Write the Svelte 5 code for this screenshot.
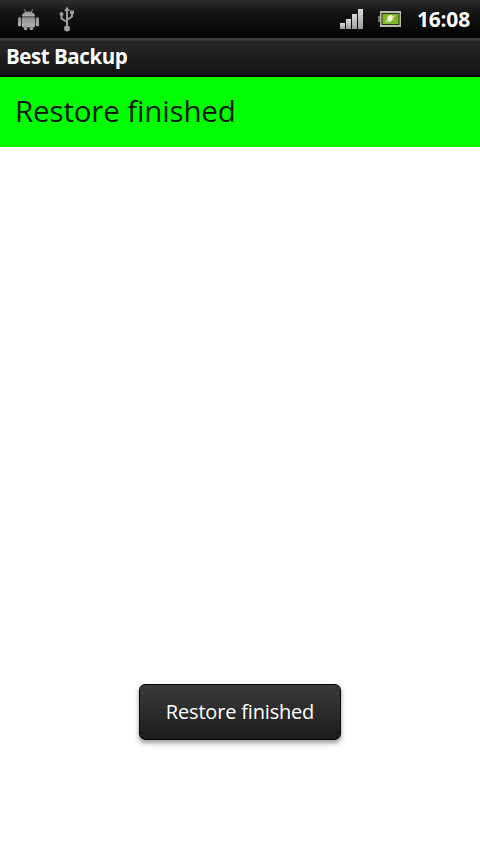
<script>
  let title = 'Best Backup';
  let message = 'Restore finished';
</script>

<div class="screen">
  <header class="status-bar">
    <div class="status-left">
      <svg class="icon" width="21" height="21" viewBox="0 0 21 21" aria-hidden="true">
        <defs>
          <linearGradient id="droid" x1="0" y1="0" x2="0" y2="1">
            <stop offset="0" stop-color="#8c8c8c" />
            <stop offset="1" stop-color="#b4b4b4" />
          </linearGradient>
        </defs>
        <g fill="url(#droid)">
          <path d="M4 7.500C4 4 7 2.500 10.500 2.500S17 4 17 7.500Z" />
          <rect x="4" y="8.300" width="13" height="10" rx="1" />
          <rect x="0" y="8.300" width="3.300" height="9" rx="1.400" />
          <rect x="17.700" y="8.300" width="3.300" height="9" rx="1.400" />
          <rect x="5.800" y="17" width="3.600" height="4" rx="1.400" />
          <rect x="11.600" y="17" width="3.600" height="4" rx="1.400" />
        </g>
        <path d="M6 0.500l2 2.500M15 0.500l-2 2.500" stroke="#8c8c8c" stroke-width="1.200" />
      </svg>
      <svg class="icon usb" width="16" height="26" viewBox="0 0 16 26" aria-hidden="true">
        <g fill="none" stroke="#9c9c9c" stroke-width="2">
          <path d="M8 4v17" />
          <path d="M2.500 9v3.500L8 16" />
          <path d="M13 7v3.500L8 14" />
        </g>
        <g fill="#9c9c9c">
          <path d="M8 0.500l2.800 4.500H5.200Z" />
          <circle cx="8" cy="22.500" r="3" />
          <circle cx="2.500" cy="8" r="2" />
          <rect x="11" y="4.500" width="4" height="3.500" />
        </g>
      </svg>
    </div>
    <div class="status-right">
      <div class="signal">
        <span class="bar b1"></span>
        <span class="bar b2"></span>
        <span class="bar b3"></span>
        <span class="bar b4"></span>
      </div>
      <svg class="icon" width="23" height="16" viewBox="0 0 23 16" aria-hidden="true">
        <rect x="0" y="5" width="2" height="6" fill="#6f7466" />
        <rect x="2" y="0" width="21" height="16" fill="#b9bdaa" />
        <rect x="3.500" y="2" width="18" height="12" fill="#2c3320" />
        <rect x="4.500" y="3" width="16" height="10" fill="#80b526" />
        <path d="M6.500 12l4-4.500H8.500L11.500 4h3l-1 2 4-2-3.500 4h2L10 12l1-2.500Z" fill="#f0f7dc" />
      </svg>
      <span class="clock">16:08</span>
    </div>
  </header>

  <div class="title-bar"><span>{title}</span></div>

  <div class="banner"><span>{message}</span></div>

  <div class="toast">{message}</div>
</div>

<style>
  :global(body) {
    margin: 0;
    background: #fff;
  }

  .screen {
    position: relative;
    width: 480px;
    height: 854px;
    overflow: hidden;
    background: #fff;
    font-family: "Open Sans", "Noto Sans", sans-serif;
  }

  .status-bar {
    box-sizing: border-box;
    height: 38px;
    display: flex;
    justify-content: space-between;
    align-items: center;
    padding: 0 10px 0 18px;
    background: linear-gradient(#2e2e2e 0, #161616 30%, #020202 95%);
  }

  .status-left {
    display: flex;
    align-items: center;
    gap: 20px;
  }

  .status-right {
    display: flex;
    align-items: center;
  }

  .icon {
    display: block;
  }

  .signal {
    display: flex;
    align-items: flex-end;
    gap: 1px;
    height: 20px;
    margin-right: 15px;
  }

  .bar {
    width: 5px;
    background: linear-gradient(#dcdcdc, #9a9a9a);
  }

  .b1 { height: 6px; }
  .b2 { height: 10px; }
  .b3 { height: 15px; }
  .b4 { height: 20px; }

  .clock {
    margin-left: 16px;
    color: #fff;
    font-size: 21px;
    font-weight: 700;
    line-height: 1;
    letter-spacing: -0.2px;
  }

  .title-bar {
    box-sizing: border-box;
    height: 39px;
    padding: 0 0 3px 6px;
    display: flex;
    align-items: center;
    color: #fff;
    font-size: 20.5px;
    font-weight: 700;
    letter-spacing: -0.45px;
    background: linear-gradient(#3c3c3c 0, #3c3c3c 2px, #282828 3px, #141414 92%, #000 100%);
  }

  .banner {
    box-sizing: border-box;
    height: 70px;
    padding: 0 0 4px 15px;
    display: flex;
    align-items: center;
    background: #0f0;
    color: #031a03;
    font-size: 29.5px;
    letter-spacing: -0.15px;
  }

  .toast {
    position: absolute;
    left: 139px;
    top: 684px;
    box-sizing: border-box;
    width: 202px;
    height: 56px;
    padding-bottom: 2px;
    display: flex;
    align-items: center;
    justify-content: center;
    border-radius: 6px;
    background: linear-gradient(#3a3a3a, #1c1c1c);
    border: 1px solid #050505;
    box-shadow: 0 3px 5px rgba(0, 0, 0, 0.4);
    color: #fff;
    font-size: 20px;
    letter-spacing: -0.18px;
  }
</style>
